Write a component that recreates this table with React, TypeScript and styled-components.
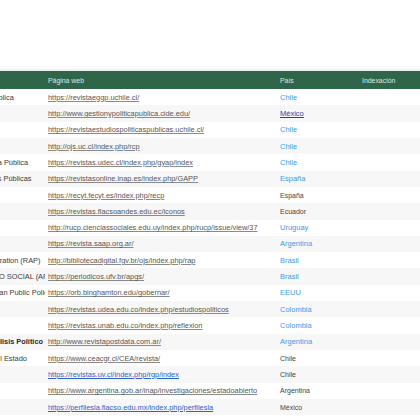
import React from "react";
import styled, { createGlobalStyle } from "styled-components";

const Global = createGlobalStyle`
  html, body { margin: 0; padding: 0; background: #ffffff; }
  body { font-family: "Liberation Sans", Arial, sans-serif; }
`;

const Page = styled.div`
  width: 420px;
  height: 420px;
  overflow: hidden;
  padding-top: 69px;
  box-sizing: border-box;
`;

const Viewport = styled.div`
  border-top: 2px solid #f1f1f1;
  overflow: hidden;
  width: 420px;
`;

const Table = styled.div`
  display: grid;
  grid-template-columns: 178px 232px 82px 80px;
  margin-left: -133px;
  width: max-content;
`;

const Row = styled.div<{ $alt?: boolean }>`
  display: contents;
  & > div {
    background: ${(p) => (p.$alt ? "#f7f7f7" : "#ffffff")};
  }
`;

const HeadCell = styled.div`
  background: #2f6548 !important;
  color: #dfe9e3;
  font-size: 6.9px;
  height: 18px;
  display: flex;
  align-items: center;
  padding-left: 3px;
  white-space: nowrap;
  overflow: hidden;
`;

const Cell = styled.div<{ $first?: boolean }>`
  height: 16.32px;
  display: flex;
  align-items: center;
  padding-left: 3px;
  white-space: nowrap;
  overflow: ${(p) => (p.$first ? "hidden" : "visible")};
  font-size: 7.4px;
  color: #333333;
`;

const Title = styled.span<{ $bold?: boolean }>`
  font-weight: ${(p) => (p.$bold ? 700 : 400)};
  color: ${(p) => (p.$bold ? "#2a2a2a" : "#3a3a3a")};
`;

const Url = styled.a<{ $blue?: boolean }>`
  color: ${(p) => (p.$blue ? "#2a62c9" : "#555555")};
  text-decoration: underline;
  text-decoration-color: ${(p) => (p.$blue ? "#2a62c9" : "#8a8a8a")};
  position: relative;
  z-index: 1;
`;

const Country = styled.span<{ $kind: "link" | "visited" | "plain" }>`
  color: ${(p) =>
    p.$kind === "link" ? "#3d9be9" : p.$kind === "visited" ? "#2b3ea8" : "#444444"};
  text-decoration: ${(p) => (p.$kind === "visited" ? "underline" : "none")};
  font-size: ${(p) => (p.$kind === "plain" ? "7px" : "7.5px")};
`;

type R = {
  title: string;
  url: string;
  country: string;
  kind: "link" | "visited" | "plain";
  blueUrl?: boolean;
  bold?: boolean;
};

const rows: R[] = [
  { title: "Revista Estado, Gobierno y Gestión Pública", url: "https://revistaeggp.uchile.cl/", country: "Chile", kind: "link" },
  { title: "Gestión y Política Pública", url: "http://www.gestionypoliticapublica.cide.edu/", country: "México", kind: "visited" },
  { title: "Revta. Estudios de Políticas Públicas", url: "https://revistaestudiospoliticaspublicas.uchile.cl/", country: "Chile", kind: "link" },
  { title: "Revista de Ciencia Política", url: "http://ojs.uc.cl/index.php/rcp", country: "Chile", kind: "link" },
  { title: "Revista de Gestión y Análisis de Política Pública", url: "https://revistas.udec.cl/index.php/gyap/index", country: "Chile", kind: "link" },
  { title: "Revista – Gestión y Análisis de Políticas Públicas", url: "https://revistasonline.inap.es/index.php/GAPP", country: "España", kind: "link" },
  { title: "Revista Española de Ciencia Política", url: "https://recyt.fecyt.es/index.php/recp", country: "España", kind: "plain" },
  { title: "Íconos", url: "https://revistas.flacsoandes.edu.ec/iconos", country: "Ecuador", kind: "plain" },
  { title: "Revista Uruguaya de Ciencia Política", url: "http://rucp.cienciassociales.edu.uy/index.php/rucp/issue/view/37", country: "Uruguay", kind: "link" },
  { title: "Revista SAAP", url: "https://revista.saap.org.ar/", country: "Argentina", kind: "link" },
  { title: "The Brazilian Journal of Public Administration (RAP)", url: "http://bibliotecadigital.fgv.br/ojs/index.php/rap", country: "Brasil", kind: "link" },
  { title: "ADMINISTRAÇÃO PÚBLICA E GESTÃO SOCIAL (APGS)", url: "https://periodicos.ufv.br/apgs/", country: "Brasil", kind: "link" },
  { title: "Gobernar – The Journal of Latin American Public Policy", url: "https://orb.binghamton.edu/gobernar/", country: "EEUU", kind: "link" },
  { title: "Estudios Políticos", url: "https://revistas.udea.edu.co/index.php/estudiospoliticos", country: "Colombia", kind: "link" },
  { title: "Reflexión Política", url: "https://revistas.unab.edu.co/index.php/reflexion", country: "Colombia", kind: "link" },
  { title: "Postdata: Revista de Reflexión y Análisis Político", url: "http://www.revistapostdata.com.ar/", country: "Argentina", kind: "link", bold: true },
  { title: "Revista Chilena de la Administración del Estado", url: "https://www.ceacgr.cl/CEA/revista/", country: "Chile", kind: "plain" },
  { title: "Revista de Gestión Pública", url: "https://revistas.uv.cl/index.php/rgp/index", country: "Chile", kind: "plain", blueUrl: true },
  { title: "Estado Abierto", url: "https://www.argentina.gob.ar/inap/investigaciones/estadoabierto", country: "Argentina", kind: "plain" },
  { title: "Perfiles Latinoamericanos", url: "https://perfilesla.flacso.edu.mx/index.php/perfilesla", country: "México", kind: "plain", blueUrl: true },
];

export default function App() {
  return (
    <>
      <Global />
      <Page>
        <Viewport>
          <Table>
            <Row>
              <HeadCell>Nombre de la revista</HeadCell>
              <HeadCell>Página web</HeadCell>
              <HeadCell>País</HeadCell>
              <HeadCell>Indexación</HeadCell>
            </Row>
            {rows.map((r, i) => (
              <Row key={i} $alt={i % 2 === 1}>
                <Cell $first>
                  <Title $bold={r.bold}>{r.title}</Title>
                </Cell>
                <Cell>
                  <Url $blue={r.blueUrl} href="#">{r.url}</Url>
                </Cell>
                <Cell>
                  <Country $kind={r.kind}>{r.country}</Country>
                </Cell>
                <Cell />
              </Row>
            ))}
          </Table>
        </Viewport>
      </Page>
    </>
  );
}
